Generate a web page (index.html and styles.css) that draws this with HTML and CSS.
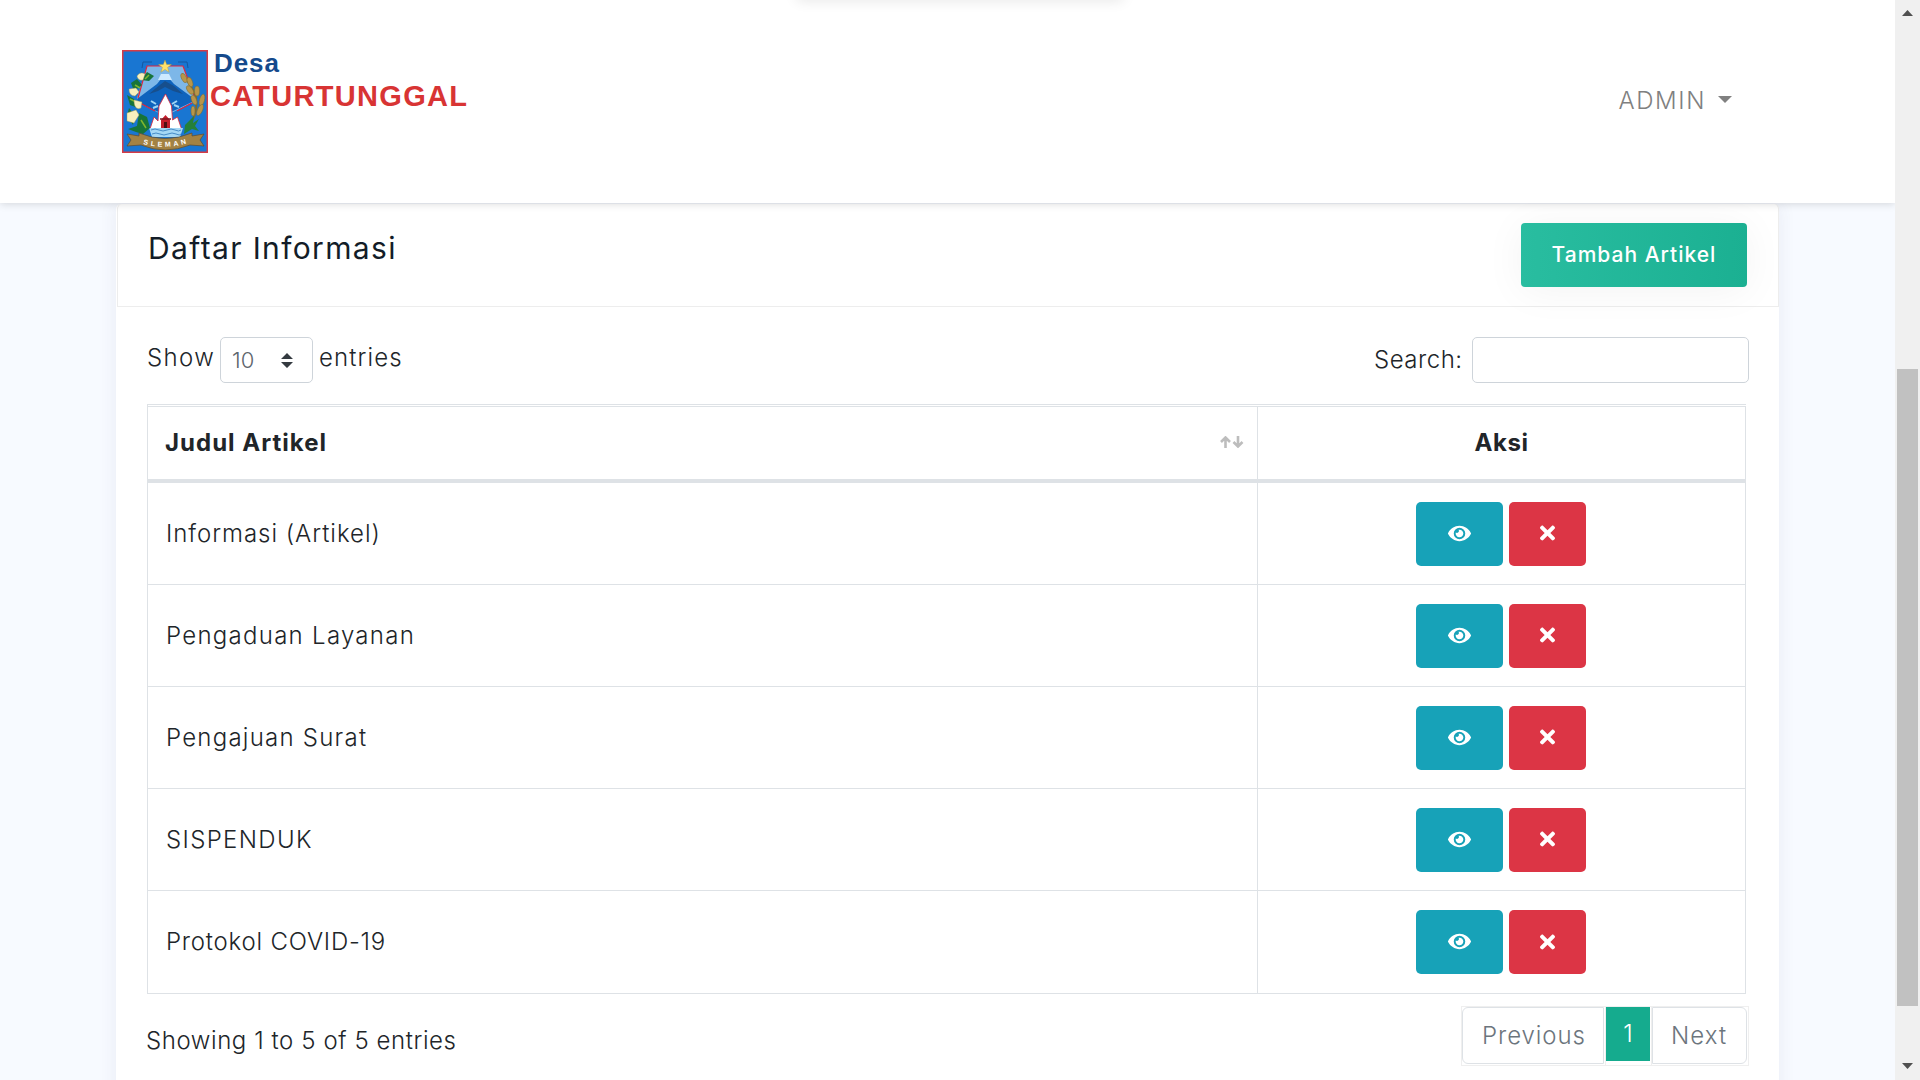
FILE: index.html
```html
<!DOCTYPE html>
<html lang="id">
<head>
<meta charset="utf-8">
<title>Daftar Informasi</title>
<link rel="stylesheet" href="styles.css">
</head>
<body>
<svg class="defs" width="0" height="0" aria-hidden="true">
  <symbol id="eye" viewBox="0 0 576 512"><path fill="#fff" d="M572.52 241.4C518.29 135.59 410.93 64 288 64S57.68 135.64 3.48 241.41a32.35 32.35 0 0 0 0 29.19C57.71 376.41 165.07 448 288 448s230.32-71.64 284.52-177.41a32.35 32.35 0 0 0 0-29.19zM288 400a144 144 0 1 1 144-144 143.93 143.93 0 0 1-144 144zm0-240a95.31 95.31 0 0 0-25.31 3.79 47.85 47.85 0 0 1-66.9 66.9A95.78 95.78 0 1 0 288 160z"/></symbol>
  <symbol id="times" viewBox="0 0 352 512"><path fill="#fff" d="M242.72 256l100.07-100.07c12.28-12.28 12.28-32.19 0-44.48l-22.24-22.24c-12.28-12.28-32.19-12.28-44.48 0L176 189.28 75.93 89.21c-12.28-12.28-32.19-12.28-44.48 0L9.21 111.45c-12.28 12.28-12.28 32.19 0 44.48L109.28 256 9.21 356.07c-12.28 12.28-12.28 32.19 0 44.48l22.24 22.24c12.28 12.28 32.2 12.28 44.48 0L176 322.72l100.07 100.07c12.28 12.28 32.2 12.28 44.48 0l22.24-22.24c12.28-12.28 12.28-32.19 0-44.48L242.72 256z"/></symbol>
</svg>
<div class="page">
  <header class="navbar">
    <a class="brand">
      <svg class="emblem" viewBox="0 0 86 103">
        <rect x=".75" y=".75" width="84.5" height="101.5" fill="#1976d2" stroke="#d63b46" stroke-width="1.5"/>
        <path d="M21 12h9M56 12h9l1 6M21 12l-1 6" stroke="#1456a0" fill="none"/>
        <path d="M25 16h36l12 32-3 5-27 13L17 53l-2-5z" fill="#7db7e8"/>
        <path d="M43 24 35 34 15 49l2 4 26 12 27-13 1-4-19-14z" fill="#0e63bd"/>
        <path d="M43 31l-9 7-7 6 9-3 7-4 8 4 10 3-9-8z" fill="#174f8d"/>
        <path d="M39 24h8l3 6H36z" fill="#cdeaff"/>
        <path d="M16 48l9-32h36l12 32M18 53l15 8M70 53l-15 8" fill="none" stroke="#e0243c" stroke-width="1.2"/>
        <path d="M29 51l5 3M31 58l5-2M55 51l-5 3M57 57l-5-2" stroke="#9fd5f4" stroke-width="2"/>
        <path d="M43.500 44l6 12 1 14 5-3 4 12H28l4-12 4 4 1-15z" fill="#fff" stroke="#e0243c" stroke-width=".8"/>
        <path d="M39 70l4.500-5 4.500 5v11h-9z" fill="#c41e2d"/>
        <path d="M38 69h11M37 81h13" stroke="#7d1822" stroke-width="1.600"/>
        <path d="M42 72h3v7h-3z" fill="#4e1015"/>
        <path d="M27 78h34l-3 9H30z" fill="#a5d8f5"/>
        <path d="M29 80q4-2 8 0t8 0 8 0 6 0M30 84q4-2 8 0t8 0 8 0 5 0" fill="none" stroke="#468bc6"/>
        <path d="M25 22l7 4-5 5-8-1zM9 33l6-4 5 6-8 6zM5 45l7 4 4 9-8-3zM7 58l6 8-2 9-6-9zM17 63l8 4 3 11-7 6-7-2-8-3 9-3z" fill="#17743a"/>
        <path d="M13 35l5 3M8 49l6 3M19 70l5 8M27 25l-4 4" stroke="#7fb52e" stroke-width="1.500"/>
        <g fill="#f8efbd" stroke="#a99b52" stroke-width=".4">
          <path d="M15 26q3-5 8-2l-2 6q-5 1-6-4z"/><path d="M7 39l7-1 3 4-4 4q-6 0-6-7z"/><path d="M12 50l8 2-1 6q-7 3-7-8z"/><path d="M5 63l9-3 3 5-5 8-7-2z"/>
        </g>
        <path d="M60 24q9 10 14 23 2 14-4 24" fill="none" stroke="#7a6b32" stroke-width="2"/>
        <g fill="#b8954a" stroke="#7a6b32" stroke-width=".5"><ellipse cx="62" cy="28" rx="2.500" ry="5" transform="rotate(-25 62 28)"/><ellipse cx="68" cy="32" rx="2.500" ry="5" transform="rotate(-20 68 32)"/><ellipse cx="68" cy="40" rx="2.500" ry="5" transform="rotate(-35 68 40)"/><ellipse cx="75" cy="41" rx="2.500" ry="5"/><ellipse cx="72" cy="50" rx="2.500" ry="5" transform="rotate(-20 72 50)"/><ellipse cx="80" cy="50" rx="2.500" ry="6" transform="rotate(15 80 50)"/><ellipse cx="78" cy="60" rx="2.500" ry="6" transform="rotate(25 78 60)"/><ellipse cx="71" cy="61" rx="2" ry="5"/></g>
        <path d="M72 66l-9 9-1 9 8-5 7 2-4-5 4-7-6 4z" fill="#25803a"/>
        <path d="M5 84l12 2v-3q26 11 53 0v3l12-2-4 6 4 6-14-1q-25 10-49 0L5 96l4-6z" fill="#a38243" stroke="#5f4b2c" stroke-width=".7"/>
        <path id="ribbon" d="M21 94q22 6 45-1" fill="none"/>
        <text class="motto"><textPath href="#ribbon" textLength="44">SLEMAN</textPath></text>
        <path d="M43 10l1.700 4.500H49.500l-3.900 2.900 1.500 4.800L43 19.400l-4.100 2.800 1.500-4.800-3.900-2.900h4.800z" fill="#ffe16a" stroke="#a8923f" stroke-width=".4"/>
      </svg>
      <span class="brand-text"><span class="brand-top">Desa</span><span class="brand-name">CATURTUNGGAL</span></span>
    </a>
    <a class="user">ADMIN<span class="caret"></span></a>
    <div class="top-glow"></div>
  </header>
  <main class="card">
    <div class="card-head">
      <h4 class="title">Daftar Informasi</h4>
      <a class="btn-add">Tambah Artikel</a>
    </div>
    <div class="card-body">
      <div class="controls">
        <div class="length">
          <span class="show">Show</span>
          <div class="select"><span>10</span><svg width="12" height="15" viewBox="0 0 12 15"><path d="M6 0l6 6H0zM6 15L0 9h12z" fill="#343a40"/></svg></div>
          <span class="entries">entries</span>
        </div>
        <label class="search"><span>Search:</span><input type="text"></label>
      </div>
      <table class="table">
        <thead><tr>
          <th class="col-title"><div class="sortable"><span class="th-title">Judul Artikel</span><svg width="24" height="12" viewBox="0 0 24 12"><path d="M5.500 12V1.500M1 6l4.500-4.500L10 6M18 0v10.500M13.500 6l4.500 4.500L22.500 6" fill="none" stroke="#bdbdbd" stroke-width="2.600"/></svg></div></th>
          <th class="col-act th-act">Aksi</th>
        </tr></thead>
        <tbody>
          <tr><td class="r1">Informasi (Artikel)</td><td><div class="actions"><a class="btn view"><svg><use href="#eye"/></svg></a><a class="btn del"><svg><use href="#times"/></svg></a></div></td></tr>
          <tr><td class="r2">Pengaduan Layanan</td><td><div class="actions"><a class="btn view"><svg><use href="#eye"/></svg></a><a class="btn del"><svg><use href="#times"/></svg></a></div></td></tr>
          <tr><td class="r3">Pengajuan Surat</td><td><div class="actions"><a class="btn view"><svg><use href="#eye"/></svg></a><a class="btn del"><svg><use href="#times"/></svg></a></div></td></tr>
          <tr><td class="r4">SISPENDUK</td><td><div class="actions"><a class="btn view"><svg><use href="#eye"/></svg></a><a class="btn del"><svg><use href="#times"/></svg></a></div></td></tr>
          <tr><td class="r5">Protokol COVID-19</td><td><div class="actions"><a class="btn view"><svg><use href="#eye"/></svg></a><a class="btn del"><svg><use href="#times"/></svg></a></div></td></tr>
        </tbody>
      </table>
      <div class="footer">
        <span class="info">Showing 1 to 5 of 5 entries</span>
        <ul class="pages">
          <li class="prev"><a>Previous</a></li>
          <li class="current"><a>1</a></li>
          <li class="next"><a>Next</a></li>
        </ul>
      </div>
    </div>
  </main>
</div>
<div class="scrollbar">
  <svg width="11" height="6" viewBox="0 0 11 6"><path d="M5.500 0L11 6H0z" fill="#505050"/></svg>
  <div class="thumb"></div>
  <svg width="11" height="6" viewBox="0 0 11 6"><path d="M5.500 6L11 0H0z" fill="#505050"/></svg>
</div>
</body>
</html>
```
FILE: styles.css
```css
* { box-sizing: border-box; }
body {
  margin: 0;
  height: 1080px;
  display: flex;
  overflow: hidden;
  background: #f7faff;
  color: #212529;
  font: 300 24px/36px Inter, sans-serif;
}
.defs { position: absolute; }
.page { width: 1895px; height: 1080px; overflow: hidden; display: flex; flex-direction: column; }

.navbar {
  position: relative;
  z-index: 1;
  flex: none;
  height: 203px;
  padding: 50px 163px 0 122px;
  display: flex;
  justify-content: space-between;
  align-items: flex-start;
  background: #fff;
  box-shadow: 0 1px 8px rgba(0, 0, 0, .15);
}
.brand { display: flex; gap: 2px; }
.emblem { width: 86px; height: 103px; display: block; }
.motto { font: 700 7px "Liberation Sans", sans-serif; fill: #fff; }
.brand-text { display: flex; flex-direction: column; font-family: "Liberation Sans", sans-serif; font-weight: 700; }
.brand-top { padding-left: 4px; font-size: 26px; line-height: 26px; letter-spacing: .93px; color: #154a8c; }
.brand-name { padding-top: 3px; font-size: 29px; line-height: 34px; letter-spacing: 1.3px; color: #d83434; }
.user { display: flex; gap: 12px; line-height: 102px; letter-spacing: 1.6px; color: #808080; }
.caret { margin-top: 46px; width: 14px; height: 7px; background: #808080; clip-path: polygon(0 0, 100% 0, 50% 100%); }
.top-glow {
  position: absolute;
  left: 796px;
  top: -12px;
  width: 328px;
  height: 10px;
  border-radius: 5px;
  box-shadow: 0 2px 14px rgba(0, 0, 0, .12);
}

.card {
  flex: none;
  width: 1663px;
  height: 900px;
  margin: 1px 0 0 116px;
  background: #fff;
  border-radius: 5px;
  box-shadow: 0 0 18px rgba(60, 60, 110, .08);
}
.card-head {
  height: 103px;
  margin: 0 0 0 1px;
  padding: 19px 31px 0 30px;
  display: flex;
  justify-content: space-between;
  align-items: flex-start;
  border: 1px solid #ededed;
  border-top: 0;
  border-radius: 5px 5px 0 0;
}
.title { margin: 0; font-weight: 400; font-size: 30px; line-height: 50px; letter-spacing: 1.36px; color: #131d28; }
.btn-add {
  width: 226px;
  height: 64px;
  border-radius: 4px;
  background: linear-gradient(90deg, #29bda0, #1bb092);
  box-shadow: 0 4px 40px rgba(0, 0, 0, .05);
  color: #fff;
  font-size: 21px;
  font-weight: 500;
  line-height: 63px;
  letter-spacing: 1px;
  text-align: center;
}
.card-body { padding: 30px 30px 0 31px; }
.controls { height: 67px; display: flex; justify-content: space-between; align-items: flex-start; }
.length { display: flex; line-height: 42px; }
.show { width: 73px; letter-spacing: 1.4px; }
.select {
  width: 93px;
  height: 46px;
  padding: 0 19px 0 11px;
  display: flex;
  align-items: center;
  justify-content: space-between;
  border: 1px solid #ced4da;
  border-radius: 5px;
  color: #5d656d;
  font-size: 22px;
}
.entries { margin-left: 6px; letter-spacing: 1.1px; }
.search { display: flex; line-height: 46px; letter-spacing: .5px; }
.search span { width: 98px; }
.search input { width: 277px; height: 46px; border: 1px solid #ced4da; border-radius: 5px; background: #fff; }

.table {
  width: 1599px;
  padding-top: 1px;
  border: 1px solid #dee2e6;
  border-right: 0;
  border-collapse: separate;
  border-spacing: 0;
  table-layout: fixed;
}
th { height: 77px; padding: 0 18px; border: solid #dee2e6; border-width: 1px 1px 4px 0; font-weight: 700; }
.col-title { width: 1110px; padding: 0 13px 0 17px; }
.sortable { display: flex; justify-content: space-between; align-items: center; }
.sortable svg { margin-bottom: 3px; }
.th-title { letter-spacing: 1.01px; }
.th-act { letter-spacing: .5px; }
td { height: 102px; padding: 0 18px; border: solid #dee2e6; border-width: 0 1px 1px 0; }
tbody tr:last-child td { border-bottom: 0; }
.r1 { letter-spacing: .97px; }
.r2 { letter-spacing: 1.28px; }
.r3 { letter-spacing: 1.24px; }
.r4 { letter-spacing: 1.35px; }
.r5 { letter-spacing: .78px; }
.actions { display: flex; justify-content: center; gap: 6px; padding-right: 2px; }
.btn { height: 64px; display: flex; align-items: center; justify-content: center; border-radius: 5px; }
.view { width: 87px; background: #17a2b8; }
.del { width: 77px; background: #dc3545; }
.view svg { width: 23px; height: 21px; margin-bottom: 1px; }
.del svg { width: 15px; height: 22px; margin-bottom: 1px; }

.footer { padding: 12px 0 0; display: flex; justify-content: space-between; align-items: flex-start; }
.info { margin-left: -1px; line-height: 70px; letter-spacing: .58px; }
.pages { margin: 0; padding: 0; list-style: none; display: flex; color: #6c757d; }
.pages li { height: 60px; border: 1px solid #efefef; border-left-width: 0; }
.pages .prev { width: 145px; border-left-width: 1px; }
.pages .current { width: 46px; }
.pages .next { width: 97px; }
.pages a { display: block; height: 57px; line-height: 55px; border: 1px solid #dee2e6; }
.prev a { width: 142px; padding-left: 19px; border-radius: 6px 0 0 6px; letter-spacing: .93px; }
.pages .current a { width: 44px; height: 54px; border: 0; background: #15ab8e; color: #fff; text-align: center; line-height: 54px; }
.next a { width: 95px; padding-left: 18px; border-radius: 0 6px 6px 0; letter-spacing: 1.09px; }

.scrollbar { width: 25px; height: 1080px; padding: 10px 0 11px; display: flex; flex-direction: column; justify-content: space-between; align-items: center; background: #f0f0f0; }
.thumb { width: 21px; height: 637px; margin-top: 297px; background: #c1c1c1; }
.scrollbar svg:last-child { margin-top: 2px; }
```
